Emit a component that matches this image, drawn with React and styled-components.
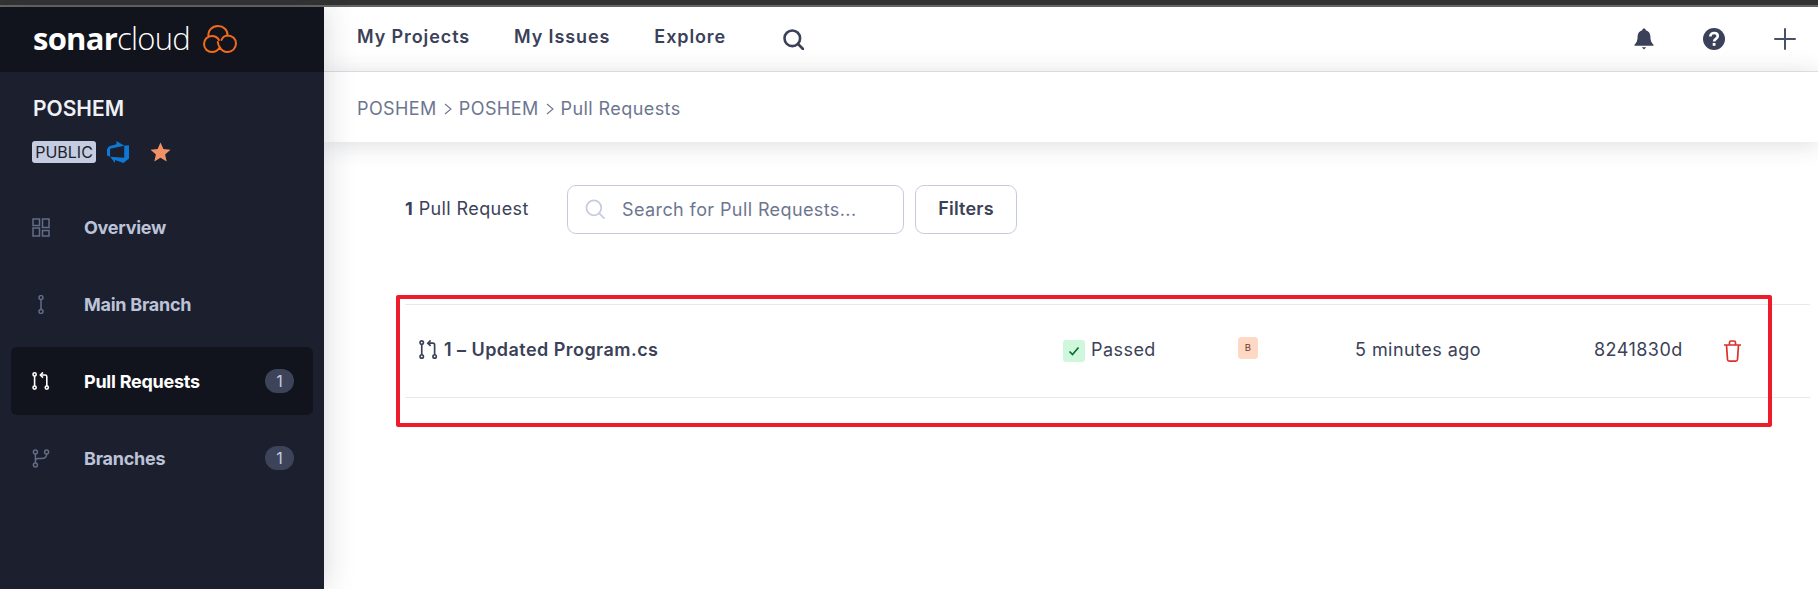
import React from "react";
import styled, { createGlobalStyle } from "styled-components";

const Global = createGlobalStyle`
  html, body { margin: 0; padding: 0; background: #fff; }
  body { font-family: Inter, "Liberation Sans", sans-serif; overflow: hidden; }
  * { box-sizing: border-box; }
`;

const Page = styled.div`
  width: 1818px;
  height: 589px;
  display: flex;
  flex-direction: column;
  overflow: hidden;
`;

const WindowEdge = styled.div`
  height: 7px;
  flex: none;
  background: #333;
  border-bottom: 2px solid #666;
`;

const Body = styled.div`
  flex: 1;
  display: flex;
  min-height: 0;
`;

const Sidebar = styled.aside`
  width: 324px;
  flex: none;
  background: #1b1f2e;
  display: flex;
  flex-direction: column;
  box-shadow: 0 0 30px rgba(30, 35, 55, 0.18);
  z-index: 3;
`;

const Brand = styled.div`
  height: 65px;
  flex: none;
  background: #11141d;
  padding: 0 0 0 33px;
  display: flex;
  align-items: center;
  gap: 13px;
`;

const Wordmark = styled.div`
  font-family: "Open Sans", sans-serif;
  font-size: 31px;
  letter-spacing: -0.75px;
  color: #fff;
  line-height: 1;
  font-weight: 300;
  position: relative;
  top: -1px;
  b { font-weight: 700; }
`;

const ProjectBlock = styled.div`
  padding: 24px 0 0 33px;
`;

const ProjectName = styled.div`
  font-size: 21px;
  font-weight: 600;
  line-height: 26px;
  color: #f0f1f5;
`;

const ProjectMeta = styled.div`
  display: flex;
  align-items: center;
  margin: 19px 0 0 -1px;
  height: 22px;
`;

const PublicTag = styled.span`
  width: 64px;
  height: 22px;
  border-radius: 3px;
  background: #c5cce0;
  color: #1b1f2e;
  font-size: 16px;
  line-height: 23px;
  text-align: center;
`;

const NavList = styled.nav`
  margin-top: 30px;
  padding: 0 11px;
  display: flex;
  flex-direction: column;
  gap: 9px;
`;

const NavItem = styled.div`
  height: 68px;
  border-radius: 6px;
  padding: 0 19px 0 21px;
  display: flex;
  align-items: center;
  background: ${(p) => (p.$active ? "#11141d" : "transparent")};
  color: ${(p) => (p.$active ? "#fff" : "#bcc3d8")};
  font-size: 18px;
  font-weight: 700;
  letter-spacing: -0.25px;
`;

const NavIcon = styled.span`
  width: 52px;
  flex: none;
  display: flex;
  align-items: center;
  color: ${(p) => (p.$active ? "#fff" : "#646d88")};
`;

const NavLabel = styled.span`
  flex: 1;
`;

const Count = styled.span`
  width: 29px;
  height: 24px;
  border-radius: 12px;
  background: #3d4359;
  color: #c5cce0;
  font-size: 16px;
  font-weight: 400;
  line-height: 24px;
  text-align: center;
`;

const Content = styled.main`
  flex: 1;
  display: flex;
  flex-direction: column;
  min-width: 0;
  position: relative;
`;

const TopNav = styled.header`
  height: 65px;
  flex: none;
  border-bottom: 1px solid #e6e7ea;
  padding: 0 22px 0 33px;
  display: flex;
  align-items: center;
  background: #fff;
`;

const TopLink = styled.a`
  font-size: 18px;
  font-weight: 600;
  letter-spacing: 0.9px;
  color: #3b4158;
  margin-right: 44px;
  position: relative;
  top: -3px;
`;

const SearchButton = styled.span`
  margin-left: 13px;
  display: flex;
`;

const TopIcons = styled.div`
  margin-left: auto;
  display: flex;
  align-items: center;
  gap: 49px;
`;

const Crumbs = styled.div`
  height: 70px;
  flex: none;
  padding: 3px 0 0 33px;
  display: flex;
  align-items: center;
  gap: 7px;
  color: #6d7690;
  font-size: 18px;
  letter-spacing: 0.42px;
  background: #fff;
  box-shadow: 0 2px 24px rgba(40, 45, 65, 0.17);
  z-index: 2;
`;

const Panel = styled.section`
  flex: 1;
  padding: 43px 8px 0 81px;
`;

const Toolbar = styled.div`
  display: flex;
  align-items: center;
  height: 49px;
`;

const Total = styled.div`
  width: 162px;
  font-size: 18px;
  letter-spacing: 0.4px;
  color: #3b4158;
  padding-bottom: 2px;
  b { font-weight: 700; }
`;

const SearchBox = styled.div`
  width: 337px;
  height: 49px;
  border: 1px solid #c5cce0;
  border-radius: 9px;
  display: flex;
  align-items: center;
  gap: 17px;
  padding: 0 0 1px 17px;
  font-size: 18px;
  letter-spacing: 0.4px;
  color: #6d7690;
`;

const FilterButton = styled.button`
  width: 102px;
  height: 49px;
  margin-left: 11px;
  padding: 0 0 2px;
  border: 1px solid #c5cce0;
  border-radius: 9px;
  background: #fff;
  font: 600 18px Inter, sans-serif;
  letter-spacing: 0.2px;
  color: #3b4158;
`;

const PullRow = styled.div`
  margin-top: 70px;
  height: 94px;
  padding-bottom: 4px;
  border-top: 1px solid #e8e9ec;
  border-bottom: 1px solid #e8e9ec;
  display: grid;
  grid-template-columns: 658px 175px 117px 239px 130px 1fr;
  align-items: center;
  color: #3b4158;
  font-size: 18px;
  letter-spacing: 0.45px;
`;

const PullTitle = styled.div`
  padding-left: 14px;
  display: flex;
  align-items: center;
  gap: 6px;
  font-weight: 600;
  color: #3b4158;
`;

const Status = styled.div`
  display: flex;
  align-items: center;
  gap: 6px;
`;

const StatusBox = styled.span`
  width: 22px;
  height: 22px;
  border-radius: 3px;
  background: #cff7dc;
  display: flex;
  align-items: center;
  justify-content: center;
  position: relative;
  top: 2px;
`;

const Rating = styled.span`
  width: 20px;
  height: 22px;
  border-radius: 4px;
  background: #fed8c3;
  color: #6c3a2b;
  font-size: 9.5px;
  line-height: 22px;
  text-align: center;
  margin-top: -2px;
`;

const Trash = styled.span`
  display: flex;
  color: #dc2f2a;
  position: relative;
  top: 2px;
`;

const Callout = styled.div`
  position: absolute;
  left: 72px;
  top: 288px;
  width: 1376px;
  height: 132px;
  border: 4px solid #ee1c2b;
  border-radius: 2px;
  pointer-events: none;
`;

const PullIcon = ({ size = 18, stroke = 1.6 }) => (
  <svg width={size} height={size} viewBox="0 0 18 18" fill="none" stroke="currentColor" strokeWidth={stroke}>
    <circle cx="2.6" cy="2.4" r="1.6" />
    <circle cx="2.6" cy="15.6" r="1.6" />
    <circle cx="14.8" cy="15.6" r="1.6" />
    <path d="M2.6 4v10M14.8 14V4.6c0-1-.6-1.6-1.6-1.6H9.5" />
    <path d="M11 .4 8.4 3 11 5.6" />
  </svg>
);

const OverviewIcon = () => (
  <svg width="18" height="19" viewBox="0 0 18 19" fill="none" stroke="currentColor" strokeWidth="1.5">
    <rect x="1" y="1" width="6.5" height="6.5" />
    <rect x="10.5" y="1" width="6.5" height="8.5" />
    <rect x="1" y="10" width="6.5" height="8" />
    <rect x="10.5" y="12.5" width="6.5" height="5.5" />
  </svg>
);

const MainBranchIcon = () => (
  <svg width="18" height="19" viewBox="0 0 18 19" fill="none" stroke="currentColor" strokeWidth="1.5">
    <circle cx="9" cy="2.6" r="2" />
    <circle cx="9" cy="16.4" r="2" />
    <path d="M9 4.6v9.8" />
  </svg>
);

const BranchesIcon = () => (
  <svg width="18" height="19" viewBox="0 0 18 19" fill="none" stroke="currentColor" strokeWidth="1.5">
    <circle cx="3.4" cy="3" r="2" />
    <circle cx="3.4" cy="16" r="2" />
    <circle cx="14.6" cy="3" r="2" />
    <path d="M3.4 5v9M14.6 5c0 3.500-2 4.600-5 4.600H6c-1.600 0-2.600.8-2.600 2.400" />
  </svg>
);

const CloudLogo = () => (
  <svg width="34" height="29" viewBox="0 0 34 29" fill="none" stroke="#f26a1b" strokeWidth="2" strokeLinecap="round">
    <path d="M5.500 12C4.500 5.500 9 1 15 1c5.500 0 10 4 9.500 9.500 5 0 8.500 3.500 8.500 8 0 5-4 8.500-8.500 8.500-3.500 0-6-1.800-7.700-4.500-1.800 2.700-4.300 4.500-7.800 4.500-4.500 0-8-3.500-8-8s3.500-8 8-8c3 0 5.500 1.500 7 4" />
    <path d="M24.500 10.500c-3 .2-5 2-6 4.500" />
    <path d="M14.800 17c.2 2 1 4 2 5.500" />
  </svg>
);

const AzureIcon = () => (
  <svg width="22" height="22" viewBox="1 1 16 16" style={{ marginLeft: 11 }}>
    <path fill="#0f78d4" d="M17 4v9.740l-4 3.280-6.200-2.260V17l-3.510-4.590 10.230.8V4.440zm-3.410.49L7.850 1v2.290L2.580 4.840 1 6.870v4.610l2.260 1V6.570z" />
  </svg>
);

const Star = () => (
  <svg width="21" height="20" viewBox="0 0 21 20" style={{ marginLeft: 21 }}>
    <path fill="#ef9066" d="M10.500.5 13.400 7l7.100.7-5.400 4.700 1.600 7-6.200-3.700-6.200 3.700 1.600-7L.5 7.700 7.600 7Z" />
  </svg>
);

const SearchGlyph = ({ size, color, stroke }) => (
  <svg width={size} height={size} viewBox="0 0 21 21" fill="none" stroke={color} strokeWidth={stroke} strokeLinecap="round">
    <circle cx="9.300" cy="9.300" r="7.800" />
    <path d="m15 15 5 5" />
  </svg>
);

const Bell = () => (
  <svg width="20" height="22" viewBox="0 0 20 22">
    <path fill="#3b4158" d="M10 .5c1 0 1.700.7 1.800 1.700 3 .8 4.600 3.300 4.600 6.600 0 3.400.8 5.600 3.100 8v1H.5v-1c2.300-2.400 3.100-4.600 3.100-8 0-3.300 1.600-5.800 4.600-6.600C8.300 1.200 9 .5 10 .5ZM7.800 19.300h4.400L10 21.500Z" />
  </svg>
);

const Help = () => (
  <svg width="22" height="22" viewBox="0 0 22 22">
    <circle cx="11" cy="11" r="11" fill="#3b4158" />
    <path fill="none" stroke="#fff" strokeWidth="2.600" d="M7.300 8.500c0-2.300 1.600-3.500 3.800-3.500s3.700 1.200 3.700 3.100c0 2.900-3.700 2.700-3.700 5.400" />
    <rect x="9.700" y="15" width="2.800" height="2.800" fill="#fff" />
  </svg>
);

const Plus = () => (
  <svg width="22" height="22" viewBox="0 0 22 22" stroke="#4a5068" strokeWidth="2" strokeLinecap="round">
    <path d="M11 1v20M1 11h20" />
  </svg>
);

const Chevron = () => (
  <svg width="8" height="12" viewBox="0 0 8 12" fill="none" stroke="#6d7690" strokeWidth="1.100">
    <path d="m1 1 6 5-6 5" />
  </svg>
);

const navItems = [
  { label: "Overview", icon: <OverviewIcon /> },
  { label: "Main Branch", icon: <MainBranchIcon /> },
  { label: "Pull Requests", icon: <PullIcon />, count: 1, active: true },
  { label: "Branches", icon: <BranchesIcon />, count: 1 },
];

const App = () => {
  return (
    <Page>
      <Global />
      <WindowEdge />
      <Body>
        <Sidebar>
          <Brand>
            <Wordmark><b>sonar</b>cloud</Wordmark>
            <CloudLogo />
          </Brand>
          <ProjectBlock>
            <ProjectName>POSHEM</ProjectName>
            <ProjectMeta>
              <PublicTag>PUBLIC</PublicTag>
              <AzureIcon />
              <Star />
            </ProjectMeta>
          </ProjectBlock>
          <NavList>
            {navItems.map((item) => (
              <NavItem key={item.label} $active={item.active}>
                <NavIcon $active={item.active}>{item.icon}</NavIcon>
                <NavLabel>{item.label}</NavLabel>
                {item.count && <Count>{item.count}</Count>}
              </NavItem>
            ))}
          </NavList>
        </Sidebar>
        <Content>
          <TopNav>
            <TopLink>My Projects</TopLink>
            <TopLink>My Issues</TopLink>
            <TopLink>Explore</TopLink>
            <SearchButton>
              <SearchGlyph size={21} color="#3b4158" stroke={2.600} />
            </SearchButton>
            <TopIcons>
              <Bell />
              <Help />
              <Plus />
            </TopIcons>
          </TopNav>
          <Crumbs>
            POSHEM <Chevron /> POSHEM <Chevron /> Pull Requests
          </Crumbs>
          <Panel>
            <Toolbar>
              <Total><b>1</b> Pull Request</Total>
              <SearchBox>
                <SearchGlyph size={20} color="#c5cce0" stroke={1.800} />
                Search for Pull Requests...
              </SearchBox>
              <FilterButton>Filters</FilterButton>
            </Toolbar>
            <PullRow>
              <PullTitle>
                <PullIcon size={19} />
                1 – Updated Program.cs
              </PullTitle>
              <Status>
                <StatusBox>
                  <svg width="12" height="12" viewBox="0 0 12 12" fill="none" stroke="#0a6b3b" strokeWidth="1.700">
                    <path d="m1.500 6.500 3 3 6-7" />
                  </svg>
                </StatusBox>
                Passed
              </Status>
              <Rating>B</Rating>
              <span>5 minutes ago</span>
              <span>8241830d</span>
              <Trash>
                <svg width="17" height="22" viewBox="0 0 17 22" fill="none" stroke="currentColor" strokeWidth="1.700">
                  <path d="M0 5h17M2.500 5l1 14.500c.1 1 .7 1.600 1.700 1.600h6.600c1 0 1.600-.6 1.700-1.600l1-14.500M5.500 5V2.500C5.500 1.500 6 1 7 1h3c1 0 1.500.5 1.500 1.500V5" />
                </svg>
              </Trash>
            </PullRow>
          </Panel>
          <Callout />
        </Content>
      </Body>
    </Page>
  );
};

export default App;
